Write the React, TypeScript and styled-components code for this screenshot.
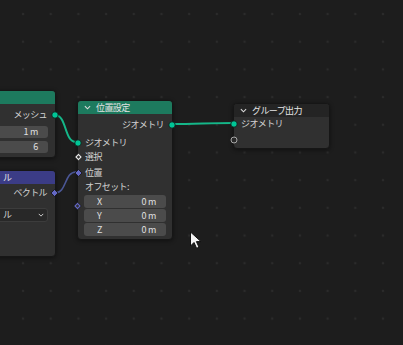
import React from 'react'
import styled, { createGlobalStyle, css } from 'styled-components'

const GlobalStyle = createGlobalStyle`
    html, body {
        margin: 0;
        padding: 0;
        background: #1d1d1d;
        overflow: hidden;
    }
`

const Canvas = styled.div`
    position: relative;
    width: 403px;
    height: 345px;
    overflow: hidden;
    background-color: #1d1d1d;
    background-image: radial-gradient(circle, #2b2b2b 1.3px, transparent 1.6px);
    background-size: 27.7px 27.7px;
    background-position: 9.2px 0.2px;
    font-family: "Noto Sans CJK JP", "Noto Sans", sans-serif;
    font-size: 9px;
    color: #d2d2d2;
`

const Links = styled.svg`
    position: absolute;
    left: 0;
    top: 0;
    pointer-events: none;
`

const NodeBox = styled.div<{ $left: number, $top: number, $width: number, $height?: number }>`
    position: absolute;
    left: ${p => p.$left}px;
    top: ${p => p.$top}px;
    width: ${p => p.$width}px;
    ${p => p.$height && css`height: ${p.$height}px;`}
    box-sizing: border-box;
    display: flex;
    flex-direction: column;
    background: #303030;
    border: 1px solid #161616;
    border-radius: 4px;
    box-shadow: 0 1px 4px rgba(0, 0, 0, 0.45);
`

const Header = styled.div<{ $color: string, $indent?: number }>`
    height: 13px;
    display: flex;
    align-items: center;
    gap: 5px;
    padding-left: ${p => p.$indent ?? 6}px;
    padding-bottom: 1px;
    box-sizing: border-box;
    background: ${p => p.$color};
    border-radius: 3px 3px 0 0;
    color: #e4e4e4;
    letter-spacing: -0.6px;
    white-space: nowrap;
`

const Body = styled.div<{ $top?: number, $bottom?: number }>`
    display: flex;
    flex-direction: column;
    padding: ${p => p.$top ?? 4}px 0 ${p => p.$bottom ?? 4}px;
`

const Row = styled.div<{ $out?: boolean, $gap?: number, $h?: number }>`
    position: relative;
    height: ${p => p.$h ?? 14}px;
    margin-top: ${p => p.$gap ?? 0}px;
    box-sizing: border-box;
    display: flex;
    align-items: center;
    justify-content: ${p => p.$out ? 'flex-end' : 'flex-start'};
    padding: 0 8px 2px 7px;
    letter-spacing: -0.6px;
    white-space: nowrap;
`

const Socket = styled.span<{ $out?: boolean, $y?: number }>`
    position: absolute;
    top: ${p => p.$y ?? 50}%;
    ${p => p.$out ? css`right: -4px;` : css`left: -4px;`}
    transform: translateY(-50%);
    display: flex;
`

const FieldStack = styled.div<{ $gap?: number, $right?: number, $left?: number, $top?: number }>`
    display: flex;
    flex-direction: column;
    gap: ${p => p.$gap ?? 1}px;
    margin: ${p => p.$top ?? 1}px ${p => p.$right ?? 6}px 0 ${p => p.$left ?? 6}px;
    position: relative;
`

const Field = styled.div<{ $h?: number }>`
    height: ${p => p.$h ?? 13}px;
    box-sizing: border-box;
    display: flex;
    align-items: center;
    justify-content: space-between;
    padding: 0 10px 1px 13px;
    background: #4b4b4b;
    border-radius: 3px;
    color: #e0e0e0;
    letter-spacing: -0.3px;
    white-space: nowrap;
`

const Dropdown = styled.div<{ $indent: number }>`
    height: 14px;
    box-sizing: border-box;
    margin: 8px 7px 0 6px;
    display: flex;
    align-items: center;
    justify-content: space-between;
    padding: 0 3px 1px ${p => p.$indent}px;
    background: #282828;
    border: 1px solid #3c3c3c;
    border-radius: 3px;
    color: #d2d2d2;
    white-space: nowrap;
`

const Cursor = styled.svg`
    position: absolute;
    left: 189px;
    top: 231px;
`

const Chevron: React.FC<{ size?: number }> = ({ size = 7 }) => (
    <svg width={size} height={size} viewBox="0 0 8 8">
        <polyline points="1,2.5 4,5.5 7,2.5" fill="none" stroke="#dcdcdc" strokeWidth="1.2" />
    </svg>
)

const GeoSocket: React.FC<{ hollow?: boolean }> = ({ hollow }) => (
    <svg width="8" height="8" viewBox="0 0 8 8">
        {hollow
            ? <circle cx="4" cy="4" r="3" fill="#2a2a2a" stroke="#a8a8a8" strokeWidth="1" />
            : <circle cx="4" cy="4" r="3.2" fill="#00c596" stroke="#111" strokeWidth="0.8" />}
    </svg>
)

const Diamond: React.FC<{ color: string, dot?: boolean }> = ({ color, dot }) => (
    <svg width="9" height="9" viewBox="0 0 9 9">
        {dot
            ? <>
                <polygon points="4.5,0.8 8.2,4.5 4.5,8.2 0.8,4.5" fill={color} stroke="#111" strokeWidth="0.6" />
                <polygon points="4.5,2.8 6.2,4.5 4.5,6.2 2.8,4.5" fill="#303030" />
            </>
            : <polygon points="4.5,1 8,4.5 4.5,8 1,4.5" fill={color} stroke="#111" strokeWidth="0.8" />}
    </svg>
)

export default function App() {
    return (
        <Canvas>
            <GlobalStyle />

            <Links width="403" height="345">
                <path d="M55 115 C 67 115, 64 142, 76 142" fill="none" stroke="#15b789" strokeWidth="2" />
                <path d="M172 124 C 195 124, 210 123, 233 123" fill="none" stroke="#15b789" strokeWidth="2" />
                <path d="M55 193 C 67 193, 64 172, 76 172" fill="none" stroke="#4b5796" strokeWidth="1.6" />
            </Links>

            {/* mesh node, mostly off the left edge */}
            <NodeBox $left={-80} $top={90} $width={136}>
                <Header $color="#1d7a5e" />
                <Body $top={4} $bottom={4}>
                    <Row $out $h={14}>
                        メッシュ
                        <Socket $out><GeoSocket /></Socket>
                    </Row>
                    <FieldStack $gap={3} $right={7} $left={7} $top={4}>
                        <Field $h={12}><span /><span>1 m</span></Field>
                        <Field $h={12}><span /><span>6</span></Field>
                    </FieldStack>
                </Body>
            </NodeBox>

            {/* vector node, mostly off the left edge */}
            <NodeBox $left={-80} $top={170} $width={136} $height={87}>
                <Header $color="#3b3c86" $indent={82}>
                    ル
                </Header>
                <Body $top={2}>
                    <Row $out>
                        ベクトル
                        <Socket $out><Diamond color="#6468c4" /></Socket>
                    </Row>
                    <Dropdown $indent={75}>
                        <span>ル</span>
                        <Chevron size={6} />
                    </Dropdown>
                </Body>
            </NodeBox>

            <NodeBox $left={77} $top={100} $width={96}>
                <Header $color="#1d7a5e">
                    <Chevron />
                    位置設定
                </Header>
                <Body $top={4} $bottom={3}>
                    <Row $out>
                        ジオメトリ
                        <Socket $out><GeoSocket /></Socket>
                    </Row>
                    <Row $gap={4}>
                        ジオメトリ
                        <Socket><GeoSocket /></Socket>
                    </Row>
                    <Row>
                        選択
                        <Socket><Diamond color="#e8e8e8" dot /></Socket>
                    </Row>
                    <Row $gap={2}>
                        位置
                        <Socket><Diamond color="#6468c4" /></Socket>
                    </Row>
                    <Row>オフセット:</Row>
                    <FieldStack>
                        <Field><span>X</span><span>0 m</span></Field>
                        <Field><span>Y</span><span>0 m</span></Field>
                        <Field><span>Z</span><span>0 m</span></Field>
                        <Socket $y={28} style={{ left: -11 }}><Diamond color="#6468c4" dot /></Socket>
                    </FieldStack>
                </Body>
            </NodeBox>

            <NodeBox $left={233} $top={103} $width={97}>
                <Header $color="#242424">
                    <Chevron />
                    グループ出力
                </Header>
                <Body $top={0} $bottom={1}>
                    <Row>
                        ジオメトリ
                        <Socket><GeoSocket /></Socket>
                    </Row>
                    <Row $gap={2}>
                        <Socket><GeoSocket hollow /></Socket>
                    </Row>
                </Body>
            </NodeBox>

            <Cursor width="14" height="20" viewBox="0 0 14 20">
                <path d="M1.5 1 L1.5 15 L5 11.5 L7.6 17.3 L10 16.2 L7.4 10.6 L12 10.6 Z" fill="#f2f2f2" stroke="#111" strokeWidth="1" strokeLinejoin="round" />
            </Cursor>
        </Canvas>
    )
}
